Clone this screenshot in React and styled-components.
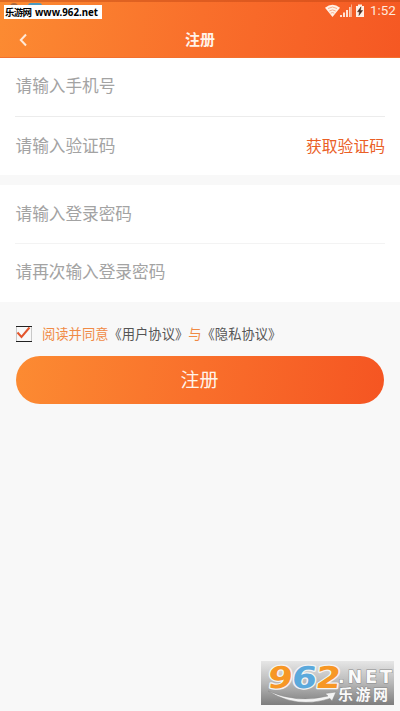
import React from 'react';
import styled, { createGlobalStyle } from 'styled-components';

const GlobalStyle = createGlobalStyle`
  * { box-sizing: border-box; }
  body {
    margin: 0;
    background: #f8f8f8;
    font-family: Roboto, "Noto Sans CJK SC", sans-serif;
  }
`;

const Screen = styled.main`
  position: relative;
  display: flex;
  flex-direction: column;
  height: 711px;
  overflow: hidden;
  background: #f8f8f8;
`;

const Header = styled.header`
  height: 58px;
  background: linear-gradient(100deg, #fc8b32 0%, #f96f2b 50%, #f55823 100%);
  border-top: 2px solid rgba(190, 70, 20, 0.45);
  border-bottom: 1px solid #f2702f;
`;

const StatusBar = styled.div`
  display: flex;
  justify-content: flex-end;
  align-items: center;
  height: 18px;
  padding-right: 5px;
`;

const StatusIcons = styled.svg`
  width: 42px;
  height: 16px;
  margin-right: 3px;
`;

const Clock = styled.span`
  width: 25px;
  color: #ffe9dc;
  font-size: 13.4px;
  line-height: 18px;
  white-space: nowrap;
`;

const NavBar = styled.div`
  display: grid;
  grid-template-columns: 48px 1fr 48px;
  align-items: center;
  height: 38px;
  padding-top: 1px;
`;

const BackIcon = styled.svg`
  width: 10px;
  height: 14px;
  margin-left: 18px;
`;

const Title = styled.h1`
  margin: 0;
  color: #fff3ea;
  font-size: 15px;
  font-weight: 700;
  line-height: 22px;
  text-align: center;
`;

const FieldGroup = styled.section`
  height: ${({ $height }) => $height}px;
  margin-bottom: ${({ $gap }) => $gap}px;
  padding: 0 15px;
  background: #fff;
`;

const FieldRow = styled.div`
  display: flex;
  align-items: center;
  justify-content: space-between;
  height: ${({ $height }) => $height}px;
  padding-top: ${({ $drop }) => $drop || 0}px;
  border-bottom: ${({ $line }) => ($line ? `1px solid ${$line}` : 'none')};
`;

const Placeholder = styled.span`
  padding-left: 0.5px;
  color: #a3a3a3;
  font-size: 16.65px;
  line-height: 24px;
`;

const CodeButton = styled.button`
  padding: 0 0 1px;
  border: 0;
  background: none;
  color: #ea6026;
  font: inherit;
  font-size: 15.8px;
  line-height: 24px;
`;

const Agreement = styled.div`
  display: flex;
  align-items: center;
  height: 20px;
  margin: 22px 0 12px 16px;
  color: #f08a45;
  font-size: 13.3px;
  line-height: 20px;
`;

const AgreementText = styled.span`
  padding-top: 2px;
`;

const CheckIcon = styled.svg`
  width: 16px;
  height: 18px;
  margin-right: 10px;
`;

const PolicyLink = styled.span`
  color: #555;
`;

const SubmitButton = styled.button`
  height: 48px;
  margin: 0 16px;
  padding: 0 1px 4px 0;
  border: 0;
  border-radius: 24px;
  background: linear-gradient(98deg, #fc8b32 0%, #f96f2b 50%, #f55522 100%);
  color: #fff3ea;
  font: inherit;
  font-size: 19px;
`;

const SiteTag = styled.div`
  position: absolute;
  top: 5px;
  left: 4px;
  width: 98px;
  height: 14px;
  background: #fff;
`;

const TagText = styled.svg`
  display: block;
  width: 98px;
  height: 14px;
  font-family: "Noto Sans", "Noto Sans CJK SC", sans-serif;
  font-weight: 700;
`;

const StatusDots = styled.svg`
  position: absolute;
  top: 2px;
  left: 0;
  width: 50px;
  height: 8px;
`;

const SiteLogo = styled.svg`
  position: absolute;
  top: 661px;
  left: 261px;
  width: 133px;
  height: 44px;
  overflow: visible;
`;

function Status() {
  return (
    <StatusBar>
      <StatusIcons viewBox="0 0 42 16">
        <path d="M0 4.8Q7.5-1.4 15 4.8L7.5 14Z" fill="#fff0e6" />
        <path d="M3 5.5q4.5-3 9 0M4.3 8q3.2-2.2 6.4 0M5.7 10.2q1.8-1.2 3.6 0" fill="none" stroke="#f69c72" strokeWidth=".8" />
        <path d="M15 14v-2h2v2zM18 14V9.500h2V14zM21 14V7h2v7z" fill="#ffe3d4" />
        <path d="M24 14V4h1.700v10z" fill="#ffd0b8" />
        <path d="M26 14V1.500h.9V14z" fill="#fbb594" />
        <path d="M31 3h2V1.500h4V3h2v11h-8z" fill="#fff0e6" />
        <path d="M36 3.800l-3.500 5h2l-.6 3.700 3.700-5h-2.200z" fill="#4a2c20" stroke="#4a2c20" strokeWidth=".5" />
      </StatusIcons>
      <Clock>1:52</Clock>
    </StatusBar>
  );
}

function Watermark() {
  return (
    <SiteLogo viewBox="0 0 133 44">
      <defs>
        <linearGradient id="plate" x1="0" y1="0" x2="0" y2="1">
          <stop offset="0" stopColor="#e6e6e6" />
          <stop offset=".5" stopColor="#b8b8b8" />
          <stop offset="1" stopColor="#7e7e7e" />
        </linearGradient>
      </defs>
      <rect width="133" height="44" fill="url(#plate)" />
      <g transform="translate(4 0) skewX(-7)" fontFamily="DejaVu Sans, sans-serif" fontWeight="700" fontSize="30" strokeWidth="2.500" stroke="#f4f4f4" strokeLinejoin="round" paintOrder="stroke">
        <text x="5" y="26.500" textLength="25" lengthAdjust="spacingAndGlyphs" fill="#f79725">9</text>
        <text x="29" y="26.500" textLength="25" lengthAdjust="spacingAndGlyphs" fill="#5ba9dc">6</text>
        <text x="53" y="26.500" textLength="25" lengthAdjust="spacingAndGlyphs" fill="#f79725">2</text>
      </g>
      <path d="M7 30Q37 43 67 35l-3-2.500 11-1.500-4 9-2-2.500Q36 48 7 30Z" fill="#f3f3f3" stroke="#888" strokeWidth=".5" />
      <g fill="#fafafa" stroke="#888" strokeWidth="1" paintOrder="stroke">
        <text x="77" y="22" textLength="54" fontFamily="DejaVu Sans, sans-serif" fontSize="17.500" fontWeight="700">.NET</text>
        <text x="77" y="39" textLength="50" fontFamily="Noto Sans CJK SC, sans-serif" fontSize="15" fontWeight="700">乐游网</text>
      </g>
    </SiteLogo>
  );
}

export default function App() {
  return (
    <>
      <GlobalStyle />
      <Screen>
        <Header>
          <Status />
          <NavBar>
            <BackIcon viewBox="0 0 10 14">
              <path d="M8 1.500L2.800 7 8 12.500" fill="none" stroke="#ffe9d8" strokeWidth="2" />
            </BackIcon>
            <Title>注册</Title>
          </NavBar>
        </Header>
        <FieldGroup $height={117} $gap={10}>
          <FieldRow $height={59} $line="#ececec">
            <Placeholder>请输入手机号</Placeholder>
          </FieldRow>
          <FieldRow $height={58} $drop={2}>
            <Placeholder>请输入验证码</Placeholder>
            <CodeButton>获取验证码</CodeButton>
          </FieldRow>
        </FieldGroup>
        <FieldGroup $height={117} $gap={0}>
          <FieldRow $height={59} $drop={2} $line="#f3f3f3">
            <Placeholder>请输入登录密码</Placeholder>
          </FieldRow>
          <FieldRow $height={58}>
            <Placeholder>请再次输入登录密码</Placeholder>
          </FieldRow>
        </FieldGroup>
        <Agreement>
          <CheckIcon viewBox="0 0 16 18">
            <path d="M.5 1v16M15.500 1v16" stroke="#c8c8c8" />
            <path d="M0 1.500h16M0 16.500h16" stroke="#222" />
            <path d="M1.500 7.500l4 4.500L13.500 2.500" fill="none" stroke="#e3552c" strokeWidth="2" />
          </CheckIcon>
          <AgreementText>
            阅读并同意<PolicyLink>《用户协议》</PolicyLink>与<PolicyLink>《隐私协议》</PolicyLink>
          </AgreementText>
        </Agreement>
        <SubmitButton>注册</SubmitButton>
        <StatusDots viewBox="0 0 50 8">
          <circle cx="14" cy="5" r="4" fill="#a9663b" />
          <rect x="28" y="1" width="14" height="7" rx="3" fill="#4b9ac0" />
        </StatusDots>
        <SiteTag>
          <TagText viewBox="0 0 98 14">
            <text x="1" y="11" fontSize="9.500" textLength="27">乐游网</text>
            <text x="31" y="10.500" fontSize="10" textLength="63" lengthAdjust="spacingAndGlyphs">www.962.net</text>
          </TagText>
        </SiteTag>
        <Watermark />
      </Screen>
    </>
  );
}
